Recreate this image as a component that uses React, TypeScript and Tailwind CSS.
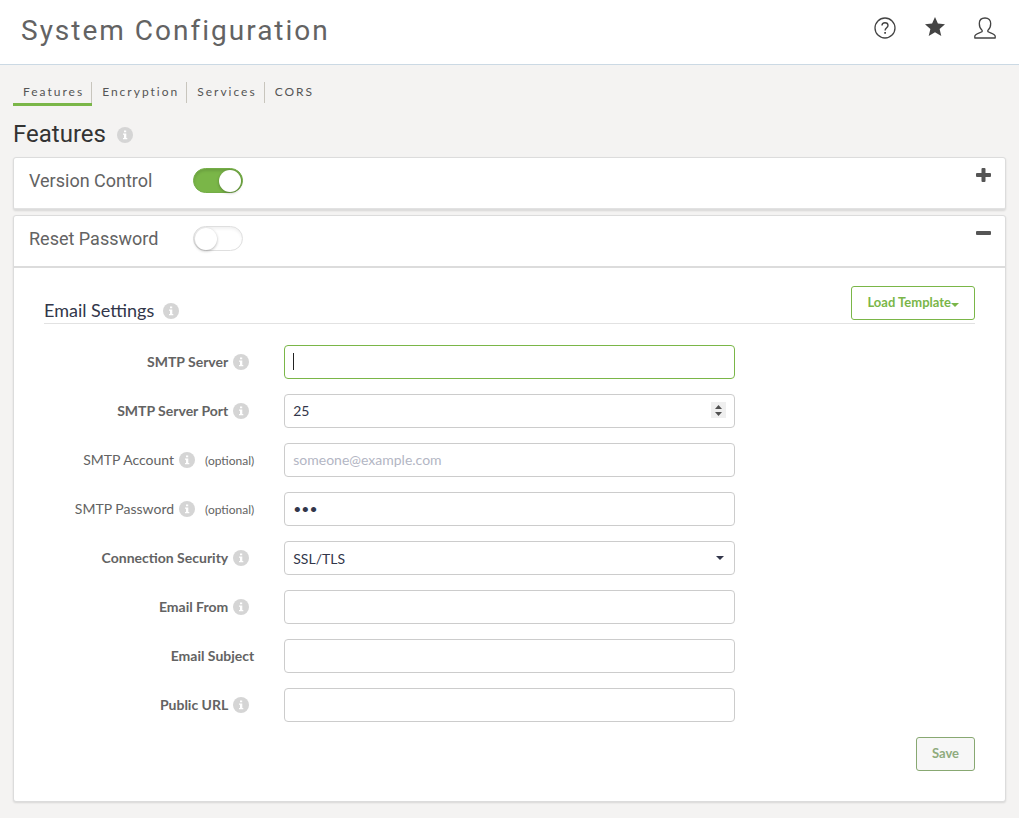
import type { InputHTMLAttributes, ReactNode } from "react";
import { useState } from "react";

function InfoIcon() {
  return (
    <svg viewBox="0 0 16 16" className="size-4 shrink-0" aria-hidden="true">
      <circle cx="8" cy="8" r="8" fill="#d5d5d5" />
      <path d="M7 3.500h2.200v1.800H7zM6 6.500h3.300v4.500h1v1.300H6V11h1V7.800H6z" fill="#fff" />
    </svg>
  );
}

function HelpIcon() {
  return (
    <svg viewBox="0 0 22 22" className="size-[22px]" fill="none" stroke="#444" aria-hidden="true">
      <circle cx="11" cy="11" r="10" strokeWidth="1.3" />
      <path d="M8 8.600C8 6.700 9.200 5.700 11 5.700s3 1 3 2.700c0 2.200-2.900 2.400-2.900 5" strokeWidth="1.4" />
      <path d="M11.100 15v1.700" strokeWidth="1.700" />
    </svg>
  );
}

function StarIcon() {
  return (
    <svg viewBox="0 0 20 20" className="size-5 fill-[#444]" aria-hidden="true">
      <path d="M10 0l2.900 6.600 7.100.6-5.400 4.700 1.700 7.100L10 15.200 3.700 19l1.700-7.100L0 7.200l7.100-.6z" />
    </svg>
  );
}

function UserIcon() {
  return (
    <svg viewBox="0 0 22 22" className="size-[22px]" fill="none" stroke="#444" strokeWidth="1.3" strokeLinejoin="round" aria-hidden="true">
      <path d="M11 1C7.300 1 5.300 3.200 5.300 6.600c0 2.600.9 5.200 2.700 6.600.4.5.3 1.300-.3 1.600C6 15.900.8 17 .8 19.200V21h20.400v-1.800c0-2.200-5.200-3.300-6.900-4.400-.6-.3-.7-1.100-.3-1.600 1.800-1.400 2.700-4 2.700-6.600C16.700 3.200 14.700 1 11 1z" />
    </svg>
  );
}

function Toggle({ label, initial }: { label: string; initial: boolean }) {
  const [on, setOn] = useState(initial);
  return (
    <label className="relative inline-flex cursor-pointer">
      <input type="checkbox" aria-label={label} checked={on} onChange={() => setOn(!on)} className="peer sr-only" />
      <span className="flex h-[25px] w-[50px] items-center justify-start rounded-full border border-[#dfdfdf] bg-white px-px inset-shadow-[0_2px_3px_rgba(0,0,0,0.06)] peer-checked:justify-end peer-checked:border-[#74ad47] peer-checked:bg-[#7ab648] peer-checked:inset-shadow-[0_2px_3px_rgba(0,0,0,0.12)]">
        <span className="size-[22px] rounded-full bg-white shadow-[0_1px_3px_rgba(0,0,0,0.3)]" />
      </span>
    </label>
  );
}

function Panel({ title, on, open, children }: { title: string; on: boolean; open: boolean; children?: ReactNode }) {
  return (
    <section className="rounded-[3px] border border-[#dcdcdc] bg-white shadow-[0_1px_2px_rgba(0,0,0,0.12)]">
      <div className={`flex items-start pr-3.5 pl-[15px] ${open ? "h-[52px] border-b-2 border-[#dcdcdc]" : "h-[51px] border-b border-[#e2e2e2]"}`}>
        <h2 className="mt-2.5 w-[164px] font-[Roboto] text-lg leading-[26px] text-[#636363]">{title}</h2>
        <div className="mt-2.5">
          <Toggle label={title} initial={on} />
        </div>
        <button type="button" aria-label={open ? `Collapse ${title}` : `Expand ${title}`} className="mt-2.5 ml-auto">
          <svg viewBox="0 0 15 15" className="size-[15px] fill-[#555]" aria-hidden="true">
            <rect x="0" y="5" width="15" height="4" rx="1" />
            {!open && <rect x="5.500" y="0" width="4" height="14" rx="1" />}
          </svg>
        </button>
      </div>
      {children}
    </section>
  );
}

function Field({ id, label, info = true, optional = false, children }: { id: string; label: string; info?: boolean; optional?: boolean; children: ReactNode }) {
  return (
    <div className="grid grid-cols-4 items-center gap-x-[30px]">
      <label htmlFor={id} className="flex items-center justify-end text-sm whitespace-nowrap text-[#636363]">
        <span className={optional ? "" : "font-bold"}>{label}</span>
        {info && (
          <span className={optional ? "mr-2.5 ml-[5px]" : "mr-[5px] ml-[5px]"}>
            <InfoIcon />
          </span>
        )}
        {optional && <span className="pt-0.5 text-xs">(optional)</span>}
      </label>
      <div className="relative col-span-2">{children}</div>
    </div>
  );
}

const control =
  "block h-[34px] w-full rounded border border-[#ccc] bg-white px-2 text-sm text-[#32364a] outline-none placeholder:text-[#b3b6c4] focus:border-[#7ab648]";

function TextField(props: InputHTMLAttributes<HTMLInputElement>) {
  return <input className={`${control} pb-0.5`} {...props} />;
}

function ServerField() {
  const [value, setValue] = useState("");
  return (
    <>
      <input
        id="server"
        type="text"
        autoFocus
        value={value}
        onChange={(e) => setValue(e.target.value)}
        className={`${control} peer pb-0.5 ${value === "" ? "caret-transparent" : ""}`}
      />
      {value === "" && <span className="pointer-events-none absolute top-2 left-[9px] hidden h-[17px] w-px bg-[#222] peer-focus:block" />}
    </>
  );
}

function PortField() {
  const [port, setPort] = useState(25);
  return (
    <>
      <input
        id="port"
        type="number"
        value={port}
        onChange={(e) => setPort(Number(e.target.value))}
        className={`${control} pb-0.5 [appearance:textfield] [&::-webkit-inner-spin-button]:appearance-none`}
      />
      <div className="absolute top-2 right-[9px] flex h-4 w-[15px] flex-col bg-[#efefef]">
        <button type="button" aria-label="Increase port" onClick={() => setPort(port + 1)} className="flex h-2 items-end justify-center pb-px">
          <svg viewBox="0 0 7 4" className="h-1 w-[7px] fill-[#505050]" aria-hidden="true"><path d="M0 4L3.500 0 7 4z" /></svg>
        </button>
        <button type="button" aria-label="Decrease port" onClick={() => setPort(port - 1)} className="flex h-2 items-start justify-center pt-0.5">
          <svg viewBox="0 0 7 4" className="h-1 w-[7px] fill-[#505050]" aria-hidden="true"><path d="M0 0h7L3.500 4z" /></svg>
        </button>
      </div>
    </>
  );
}

const tabs = ["Features", "Encryption", "Services", "CORS"];

export default function App() {
  return (
    <div className="min-h-screen bg-[#f4f3f2] pb-4 font-[Lato,sans-serif]">
      <header className="flex h-[65px] items-center justify-between border-b border-[#cbd9e4] bg-white pr-[23px] pl-[21px]">
        <h1 className="pb-0.5 font-[Roboto] text-[28px] leading-8 tracking-[2px] text-[#636363]">System Configuration</h1>
        <nav aria-label="Account" className="flex items-center gap-[29px] pb-2">
          <button type="button" aria-label="Help"><HelpIcon /></button>
          <button type="button" aria-label="Favorites" className="pb-0.5"><StarIcon /></button>
          <button type="button" aria-label="Profile"><UserIcon /></button>
        </nav>
      </header>

      <main className="px-[13px] pt-[17px]">
        <nav aria-label="Sections" className="flex">
          {tabs.map((tab, i) => (
            <a
              key={tab}
              href={`#${tab.toLowerCase()}`}
              className={`border-b-[3px] text-xs leading-5 tracking-[2px] text-[#555] ${i === 0 ? "border-[#7ab648]" : "border-transparent"}`}
            >
              <span className={`block h-[21px] pr-[7px] pl-2.5 ${i < tabs.length - 1 ? "border-r border-[#c8c5bd]" : ""}`}>{tab}</span>
            </a>
          ))}
        </nav>

        <div className="mt-3 flex items-center gap-[11px]">
          <h2 className="font-[Roboto] text-2xl leading-8 text-[#333]">Features</h2>
          <span className="pt-0.5"><InfoIcon /></span>
        </div>

        <div className="mt-[7px] flex flex-col gap-[5px]">
          <Panel title="Version Control" on={true} open={false} />
          <Panel title="Reset Password" on={false} open={true}>
            <form className="px-[30px] pt-[18px] pb-[30px]" onSubmit={(e) => e.preventDefault()}>
              <div className="flex h-[38px] items-start justify-between border-b border-[#e2e2e2]">
                <div className="mt-3 flex items-center gap-[9px]">
                  <h3 className="pb-0.5 text-lg leading-6 text-[#32364a]">Email Settings</h3>
                  <InfoIcon />
                </div>
                <button type="button" className="flex h-[34px] items-center rounded-[3px] border border-[#7ab648] bg-white px-[15px] text-[13px] font-bold text-[#7ab648]">
                  Load Template
                  <svg viewBox="0 0 8 4" className="mt-1 h-1 w-2 fill-current" aria-hidden="true"><path d="M0 0h8L4 4z" /></svg>
                </button>
              </div>

              <div className="mt-[21px] flex flex-col gap-[15px]">
                <Field id="server" label="SMTP Server">
                  <ServerField />
                </Field>
                <Field id="port" label="SMTP Server Port">
                  <PortField />
                </Field>
                <Field id="account" label="SMTP Account" optional>
                  <TextField id="account" type="email" placeholder="someone@example.com" />
                </Field>
                <Field id="password" label="SMTP Password" optional>
                  <TextField id="password" type="password" defaultValue="abc" />
                </Field>
                <Field id="security" label="Connection Security">
                  <select id="security" defaultValue="SSL/TLS" className={`${control} appearance-none pt-0.5`}>
                    <option>None</option>
                    <option>STARTTLS</option>
                    <option>SSL/TLS</option>
                  </select>
                  <svg viewBox="0 0 8 4" className="pointer-events-none absolute top-[15px] right-[11px] h-1 w-2 fill-[#32364a]" aria-hidden="true"><path d="M0 0h8L4 4z" /></svg>
                </Field>
                <Field id="from" label="Email From">
                  <TextField id="from" type="text" />
                </Field>
                <Field id="subject" label="Email Subject" info={false}>
                  <TextField id="subject" type="text" />
                </Field>
                <Field id="url" label="Public URL">
                  <TextField id="url" type="text" />
                </Field>
              </div>

              <div className="mt-[15px] flex justify-end">
                <button type="submit" className="h-[34px] rounded-[3px] border border-[#88a872] bg-[#f7f7f7] px-[15px] text-[13px] font-bold text-[#8fab7d]">
                  Save
                </button>
              </div>
            </form>
          </Panel>
        </div>
      </main>
    </div>
  );
}
